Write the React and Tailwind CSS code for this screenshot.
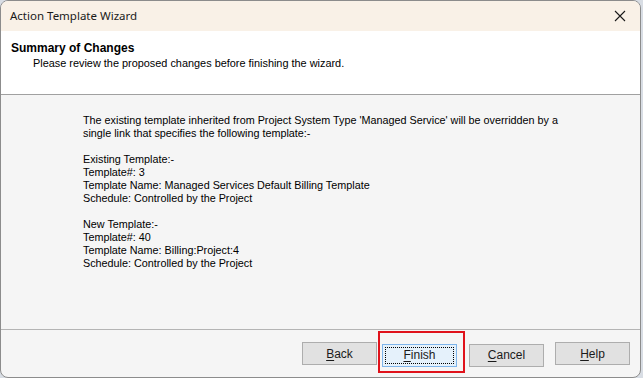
import React from 'react';

const lines1 = [
  "The existing template inherited from Project System Type 'Managed Service' will be overridden by a",
  'single link that specifies the following template:-',
  '',
  'Existing Template:-',
  'Template#: 3',
  'Template Name: Managed Services Default Billing Template',
  'Schedule: Controlled by the Project',
  '',
  'New Template:-',
  'Template#: 40',
  'Template Name: Billing:Project:4',
  'Schedule: Controlled by the Project',
];

// Button with an underlined access key
const WizButton = ({ label, keyIndex = 0, focused }) => (
  <button
    className={
      focused
        ? 'w-[75px] h-[23px] border border-[#7eb4ea] bg-[#e5f1fb] p-[2px] text-[12px] text-[#1a1a1a]'
        : 'w-[75px] h-[23px] border border-[#adadad] bg-[#e1e1e1] text-[12px] text-[#1a1a1a]'
    }
  >
    <span
      className={
        focused
          ? 'flex h-full w-full items-center justify-center border border-dotted border-black'
          : 'flex h-full w-full items-center justify-center'
      }
    >
      {label.slice(0, keyIndex)}
      <span className="underline underline-offset-2">{label[keyIndex]}</span>
      {label.slice(keyIndex + 1)}
    </span>
  </button>
);

export default function App() {
  return (
    <div className="w-[643px] h-[378px] bg-[#d8dde4] overflow-hidden" style={{ fontFamily: '"Liberation Sans", Arial, sans-serif' }}>
      <div className="w-[641px] h-[378px] flex flex-col border border-[#8c8c8c] rounded-t-[8px] rounded-b-[8px] overflow-hidden bg-[#f5f5f5]">
        {/* title bar */}
        <div className="h-[30px] shrink-0 bg-[#f9f1e7] flex items-center justify-between pl-[9px] pr-[14px]">
          <span className="text-[11.5px] text-[#1a1a1a]" style={{ fontFamily: '"Noto Sans", "Open Sans", sans-serif' }}>
            Action Template Wizard
          </span>
          <svg width="12" height="12" viewBox="0 0 12 12" className="text-[#1a1a1a]">
            <path d="M1 1 L11 11 M11 1 L1 11" stroke="currentColor" strokeWidth="1.1" fill="none" />
          </svg>
        </div>
        {/* header */}
        <div className="h-[64px] shrink-0 bg-white border-b border-[#a0a0a0] pl-[10px] pt-[10px]">
          <div className="text-[12px] font-bold text-black leading-[14px]">Summary of Changes</div>
          <div className="text-[10.9px] text-black pl-[22px] leading-[14px] pt-[1px]">
            Please review the proposed changes before finishing the wizard.
          </div>
        </div>
        {/* content */}
        <div className="flex-1 pl-[82px] pt-[19px]">
          {lines1.map((l, i) => (
            <div key={i} className="text-[10.8px] leading-[13px] h-[13px] text-black whitespace-pre">
              {l}
            </div>
          ))}
        </div>
        {/* footer */}
        <div className="h-[48px] shrink-0 border-t border-[#b4b4b4] flex items-start justify-end pr-[10px] pt-[12px]">
          <WizButton label="Back" />
          <div className="relative ml-[5px] mr-[12px]">
            <WizButton label="Finish" focused />
            <div className="absolute -left-[4px] -top-[11px] w-[87px] h-[42px] border-2 border-[#e0121b] pointer-events-none" />
          </div>
          <div className="mr-[11px]">
            <WizButton label="Cancel" />
          </div>
          <WizButton label="Help" />
        </div>
      </div>
    </div>
  );
}
